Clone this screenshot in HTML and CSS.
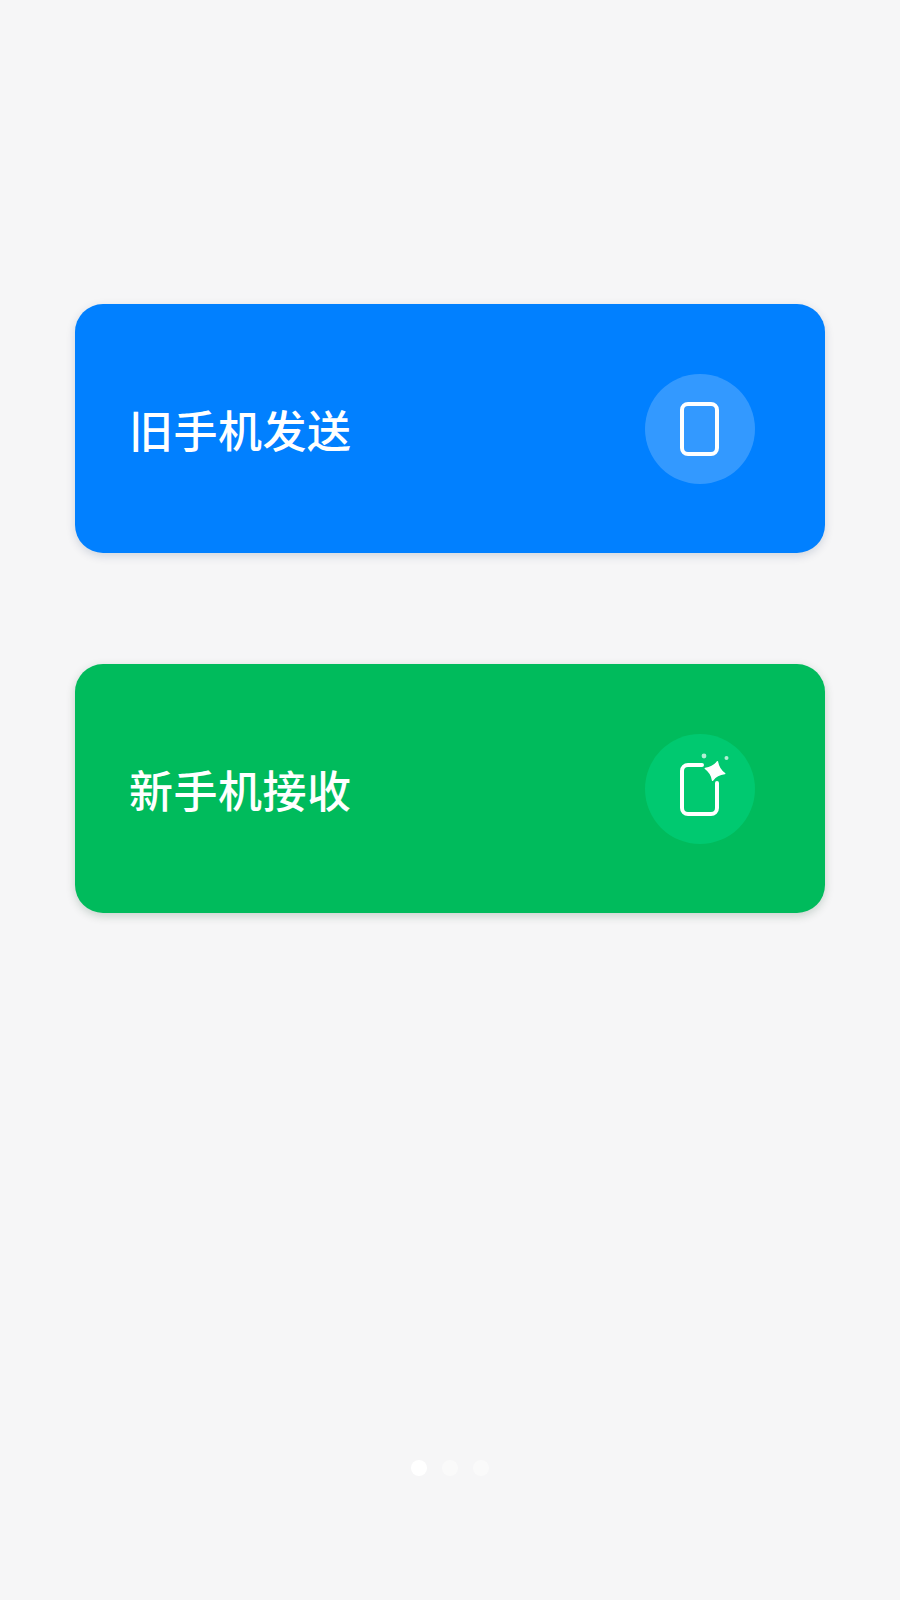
FILE: index.html
```html
<!doctype html>
<html lang="zh-CN">
<head>
	<meta charset="utf-8">
	<title>换机</title>
	<link rel="stylesheet" href="styles.css">
</head>

<body>
	<section id="page">
		<div class="card blue">
			<span class="label">旧手机发送</span>
			<div class="badge">
				<svg width="110" height="110" viewBox="0 0 110 110">
					<rect x="37" y="30" width="35" height="50" rx="6" fill="none" stroke="#fff" stroke-width="4"/>
				</svg>
			</div>
		</div>

		<div class="card green">
			<span class="label">新手机接收</span>
			<div class="badge">
				<svg width="110" height="110" viewBox="0 0 110 110">
					<path d="M57 31H43a6 6 0 0 0-6 6V74a6 6 0 0 0 6 6H66a6 6 0 0 0 6-6V49" fill="none" stroke="#fff" stroke-width="4" stroke-linecap="round"/>
					<path d="M70 27.500Q72.800 34.200 80 37Q72.800 39.800 70 46.500Q67.200 39.800 60 37Q67.200 34.200 70 27.500Z" fill="#fff" stroke="#fff" stroke-width="1.500" stroke-linejoin="round" transform="rotate(15 70 37)"/>
					<circle cx="59" cy="22" r="2.400" fill="#fff" opacity="0.7"/>
					<circle cx="81.500" cy="24" r="2" fill="#fff" opacity="0.7"/>
				</svg>
			</div>
		</div>

		<div class="dots">
			<span class="dot on"></span>
			<span class="dot"></span>
			<span class="dot"></span>
		</div>
	</section>
</body>
</html>
```

FILE: styles.css
```css
* {
	margin: 0;
	padding: 0;
	box-sizing: border-box;
}

body {
	background-color: #f6f6f7;
	font-family: "Noto Sans CJK SC", "Liberation Sans", sans-serif;
}

#page {
	width: 900px;
	height: 1600px;
	padding: 304px 75px 0;
	display: flex;
	flex-direction: column;
	gap: 111px;
}

.card {
	height: 249px;
	padding: 0 70px 0 54px;
	border-radius: 28px;
	display: flex;
	align-items: center;
	justify-content: space-between;
	color: white;
}
.blue {
	background-color: #0180ff;
	box-shadow: 0 3px 10px rgba(0, 40, 90, 0.16);
}
.green {
	background-color: #00bb5c;
	box-shadow: 0 3px 10px rgba(0, 60, 30, 0.2);
}

.label {
	font-size: 44px;
	font-weight: 500;
	line-height: 60px;
	letter-spacing: 0.5px;
}

.badge {
	width: 110px;
	height: 110px;
	border-radius: 50%;
}
.badge svg {
	display: block;
}
.blue .badge {
	background-color: #3399ff;
}
.green .badge {
	background-color: #00c970;
}

.dots {
	margin-top: 436px;
	display: flex;
	justify-content: center;
	gap: 15px;
}
.dot {
	width: 16px;
	height: 16px;
	border-radius: 50%;
	background-color: #fafafa;
}
.dot.on {
	background-color: #ffffff;
}
```
